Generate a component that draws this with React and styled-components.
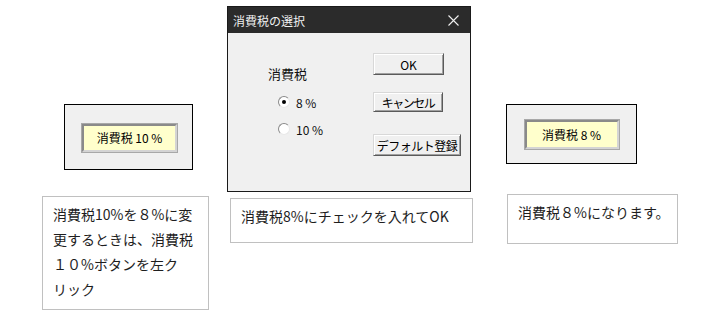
import React from 'react'
import styled, { createGlobalStyle } from 'styled-components'

const GlobalStyle = createGlobalStyle`
    html, body {
        margin: 0;
        background: #fff;
    }
    body {
        font-family: "Noto Sans CJK JP", "Noto Sans", sans-serif;
        color: #222;
    }
`

const Page = styled.main`
    display: flex;
    align-items: flex-start;
    width: 718px;
    height: 323px;
`

const Column = styled.section`
    display: flex;
    flex-direction: column;
    align-items: flex-start;
    width: ${p => p.$width}px;
    margin-left: ${p => p.$left}px;
`

const Sheet = styled.div`
    box-sizing: border-box;
    display: flex;
    justify-content: center;
    align-items: center;
    width: ${p => p.$width}px;
    height: ${p => p.$height}px;
    margin: 104px 0 0 ${p => p.$left}px;
    background: #f0f0f0;
    border: 1px solid #000;
`

const TaxButton = styled.div`
    box-sizing: border-box;
    display: flex;
    justify-content: center;
    align-items: center;
    width: ${p => p.$width}px;
    height: ${p => p.$height}px;
    margin: ${p => p.$shift}px 0 0 ${p => p.$shift * 2}px;
    background: #ffffcc;
    border: 2px solid;
    border-color: #8a8a8a #d4d4d4 #d4d4d4 #8a8a8a;
    outline: 1px solid #a8a8a8;
    font-size: 12px;
    color: #000;
    white-space: pre;
`

const Caption = styled.div`
    box-sizing: border-box;
    width: ${p => p.$width}px;
    height: ${p => p.$height}px;
    margin: ${p => p.$top}px 0 0 ${p => p.$left || 0}px;
    padding: ${p => p.$padTop}px 0 0 ${p => p.$padLeft}px;
    background: #fff;
    border: 1px solid #c0c0c0;
    font-size: 14px;
    line-height: ${p => p.$lineHeight}px;
    white-space: nowrap;
    color: #1e1e1e;
`

const Dialog = styled.div`
    box-sizing: border-box;
    display: flex;
    flex-direction: column;
    width: 244px;
    height: 186px;
    margin-top: 6px;
    border: 1px solid #1a1a1a;
    background: #f0f0f0;
`

const TitleBar = styled.div`
    display: flex;
    align-items: center;
    justify-content: space-between;
    height: 26px;
    padding: 0 11px 0 5px;
    background: #2b2b2b;
    color: #f0f0f0;
    font-size: 12px;
`

const DialogBody = styled.div`
    display: flex;
    flex: 1;
`

const OptionGroup = styled.div`
    display: flex;
    flex-direction: column;
    width: 105px;
    padding: 33px 0 0 40px;
`

const GroupLabel = styled.div`
    font-size: 13px;
    line-height: 16px;
    color: #111;
`

const RadioRow = styled.label`
    display: flex;
    align-items: center;
    gap: 6px;
    height: 14px;
    margin: ${p => p.$top}px 0 0 10px;
    font-size: 12px;
    color: #111;
`

const RadioDot = styled.span`
    box-sizing: border-box;
    position: relative;
    width: 12px;
    height: 12px;
    border-radius: 50%;
    background: #fff;
    border: 1px solid;
    border-color: #8a8a8a #e8e8e8 #e8e8e8 #8a8a8a;

    &::after {
        content: '';
        display: ${p => (p.$checked ? 'block' : 'none')};
        position: absolute;
        left: 3px;
        top: 3px;
        width: 4px;
        height: 4px;
        border-radius: 50%;
        background: #000;
    }
`

const ButtonStack = styled.div`
    display: flex;
    flex-direction: column;
    align-items: flex-start;
    padding-top: 20px;
`

const DialogButton = styled.button`
    box-sizing: border-box;
    display: flex;
    justify-content: center;
    align-items: center;
    width: ${p => p.$width}px;
    height: ${p => p.$height}px;
    margin-top: ${p => p.$top || 0}px;
    padding: 0;
    background: #f0f0f0;
    border: 1px solid;
    border-color: #d8d8d8 #5a5a5a #5a5a5a #d8d8d8;
    box-shadow: inset 1px 1px #fff, inset -1px -1px #a0a0a0;
    font-family: "Noto Sans CJK JP", sans-serif;
    font-size: 12px;
    letter-spacing: ${p => p.$tight || 0}px;
    color: #000;
    white-space: nowrap;
`

const CloseIcon = () => (
    <svg width="11" height="11" viewBox="0 0 11 11">
        <path d="M0.5 0.5 L10.5 10.5 M10.5 0.5 L0.5 10.5" stroke="#f0f0f0" strokeWidth="1.1" />
    </svg>
)

const App = () => {
    return (
        <>
            <GlobalStyle />
            <Page>
                <Column $width={167} $left={42}>
                    <Sheet $width={129} $height={66} $left={22}>
                        <TaxButton $width={95} $height={28} $shift={1}>消費税 10 %</TaxButton>
                    </Sheet>
                    <Caption $width={167} $height={114} $top={26} $padTop={5} $padLeft={10} $lineHeight={25}>
                        消費税10%を８%に変<br />
                        更するときは、消費税<br />
                        １０%ボタンを左ク<br />
                        リック
                    </Caption>
                </Column>

                <Column $width={246} $left={18}>
                    <Dialog>
                        <TitleBar>
                            <span>消費税の選択</span>
                            <CloseIcon />
                        </TitleBar>
                        <DialogBody>
                            <OptionGroup>
                                <GroupLabel>消費税</GroupLabel>
                                <RadioRow $top={13}>
                                    <RadioDot $checked />
                                    8 %
                                </RadioRow>
                                <RadioRow $top={13}>
                                    <RadioDot />
                                    10 %
                                </RadioRow>
                            </OptionGroup>
                            <ButtonStack>
                                <DialogButton $width={71} $height={22}>OK</DialogButton>
                                <DialogButton $width={70} $height={20} $top={17} $tight={-1.5}>キャンセル</DialogButton>
                                <DialogButton $width={88} $height={22} $top={22} $tight={-0.5}>デフォルト登録</DialogButton>
                            </ButtonStack>
                        </DialogBody>
                    </Dialog>
                    <Caption $width={243} $height={45} $top={6} $left={3} $padTop={7} $padLeft={10} $lineHeight={20}>
                        消費税8%にチェックを入れてOK
                    </Caption>
                </Column>

                <Column $width={172} $left={33}>
                    <Sheet $width={131} $height={60} $left={0}>
                        <TaxButton $width={94} $height={29} $shift={0}>消費税 8 %</TaxButton>
                    </Sheet>
                    <Caption $width={171} $height={50} $top={30} $left={1} $padTop={7} $padLeft={10} $lineHeight={20}>
                        消費税８%になります。
                    </Caption>
                </Column>
            </Page>
        </>
    )
}

export default App
